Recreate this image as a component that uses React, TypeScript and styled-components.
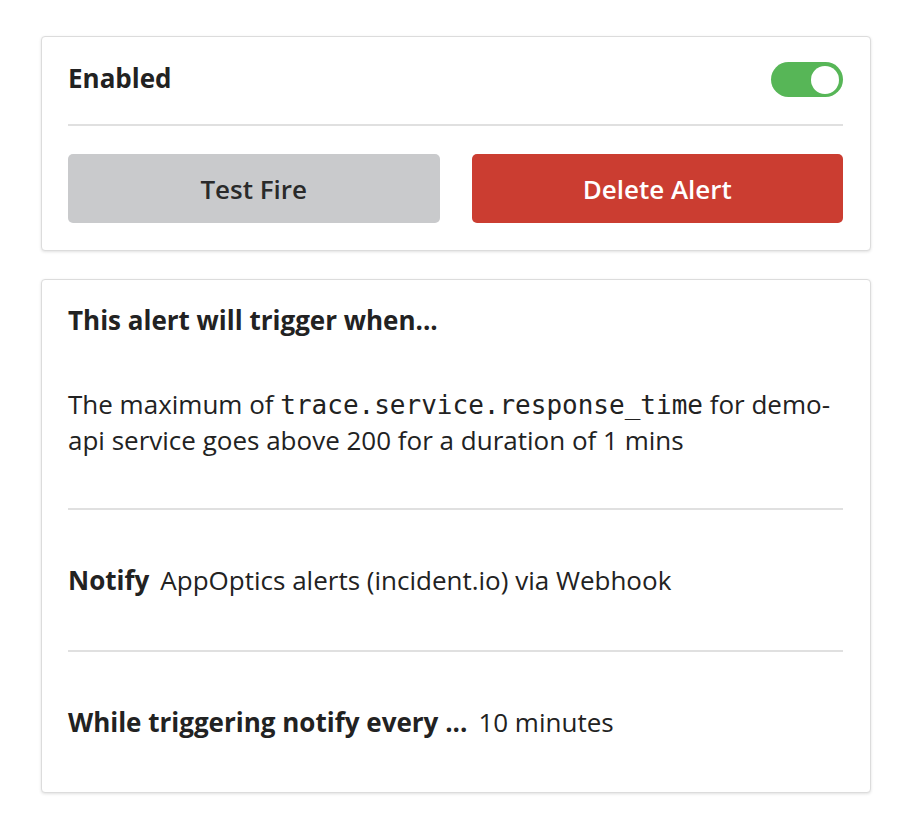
import React from "react";
import styled, { createGlobalStyle } from "styled-components";

const GlobalStyle = createGlobalStyle`
  body {
    margin: 0;
    background: #ffffff;
    font-family: "Open Sans", "Noto Sans", sans-serif;
    color: #222222;
  }
`;

const Page = styled.div`
  padding: 36px 37px 20px 41px;
  display: flex;
  flex-direction: column;
  gap: 28px;
`;

const Card = styled.div`
  background: #fff;
  border: 1px solid #dcdcdc;
  border-radius: 4px;
  box-shadow: 0 1px 3px rgba(0, 0, 0, 0.12);
  padding: 0 27px 0 26px;
`;

const ToggleRow = styled.div`
  display: flex;
  align-items: center;
  justify-content: space-between;
  padding: 25px 0 27px;
  border-bottom: 2px solid #e0e0e0;
`;

const Label = styled.span`
  font-size: 26px;
  font-weight: 700;
  line-height: 35px;
  margin-top: -3px;
`;

const Toggle = styled.div<{ $on: boolean }>`
  width: 72px;
  height: 35px;
  border-radius: 18px;
  background: ${(p) => (p.$on ? "#57b657" : "#ccc")};
  display: flex;
  align-items: center;
  justify-content: ${(p) => (p.$on ? "flex-end" : "flex-start")};
  padding: 0 4px;
  box-sizing: border-box;

  &::after {
    content: "";
    width: 28px;
    height: 28px;
    border-radius: 50%;
    background: #fff;
  }
`;

const Buttons = styled.div`
  display: grid;
  grid-template-columns: 1fr 1fr;
  gap: 32px;
  padding: 28px 0 27px;
`;

const Button = styled.button<{ $danger?: boolean }>`
  height: 69px;
  border: none;
  border-radius: 5px;
  font-family: "Open Sans", sans-serif;
  font-size: 26px;
  font-weight: 600;
  background: ${(p) => (p.$danger ? "#cb3d31" : "#c9cacc")};
  color: ${(p) => (p.$danger ? "#fff" : "#2a2a2a")};
  cursor: pointer;
`;

const Section = styled.div<{ $first?: boolean; $last?: boolean }>`
  padding: ${(p) => (p.$first ? "23px" : "53px")} 0 ${(p) => (p.$first ? "50px" : "52px")};
  border-bottom: ${(p) => (p.$last ? "none" : "2px solid #e0e0e0")};
  line-height: 35px;
`;

const Heading = styled.div`
  font-size: 26px;
  font-weight: 700;
  margin-bottom: 49px;
`;

const Text = styled.p`
  margin: 0;
  font-size: 26px;
`;

const Code = styled.code`
  font-family: "DejaVu Sans Mono", monospace;
  font-size: 26px;
`;

const Line = styled.div`
  display: flex;
  align-items: baseline;
  gap: 11px;
`;

const Strong = styled.span`
  font-size: 26px;
  font-weight: 700;
`;

const Value = styled.span`
  font-size: 26px;
`;

export default function App() {
  return (
    <>
      <GlobalStyle />
      <Page>
        <Card>
          <ToggleRow>
            <Label>Enabled</Label>
            <Toggle $on />
          </ToggleRow>
          <Buttons>
            <Button>Test Fire</Button>
            <Button $danger>Delete Alert</Button>
          </Buttons>
        </Card>
        <Card>
          <Section $first>
            <Heading>This alert will trigger when...</Heading>
            <Text>
              The maximum of <Code>trace.service.response_time</Code> for demo-api service goes above 200 for a
              duration of 1 mins
            </Text>
          </Section>
          <Section>
            <Line>
              <Strong>Notify</Strong>
              <Value>AppOptics alerts (incident.io) via Webhook</Value>
            </Line>
          </Section>
          <Section $last>
            <Line>
              <Strong>While triggering notify every ...</Strong>
              <Value>10 minutes</Value>
            </Line>
          </Section>
        </Card>
      </Page>
    </>
  );
}
